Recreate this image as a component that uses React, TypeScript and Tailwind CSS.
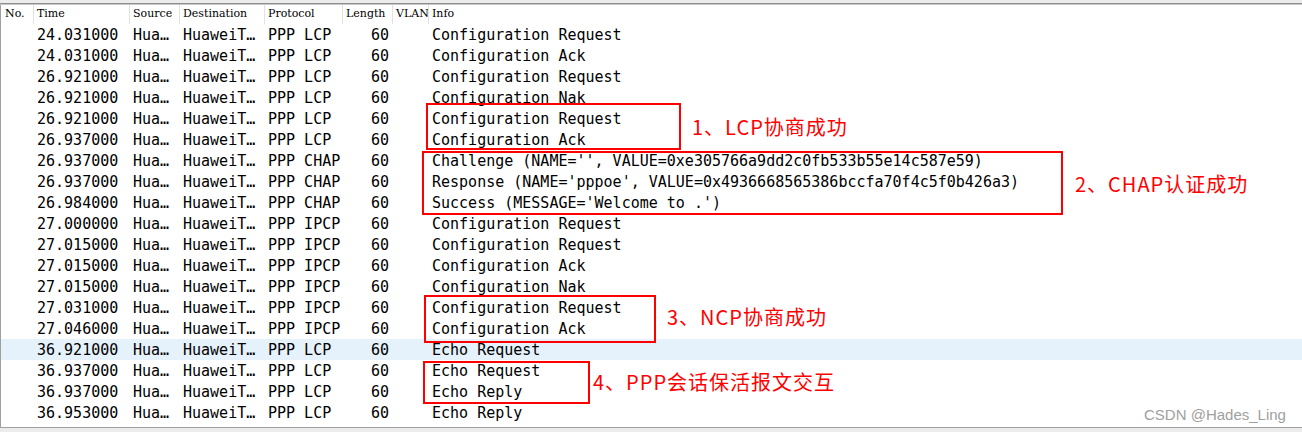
const rows: [string, string, string][] = [
  ['24.031000', 'PPP LCP', 'Configuration Request'],
  ['24.031000', 'PPP LCP', 'Configuration Ack'],
  ['26.921000', 'PPP LCP', 'Configuration Request'],
  ['26.921000', 'PPP LCP', 'Configuration Nak'],
  ['26.921000', 'PPP LCP', 'Configuration Request'],
  ['26.937000', 'PPP LCP', 'Configuration Ack'],
  ['26.937000', 'PPP CHAP', "Challenge (NAME='', VALUE=0xe305766a9dd2c0fb533b55e14c587e59)"],
  ['26.937000', 'PPP CHAP', "Response (NAME='pppoe', VALUE=0x4936668565386bccfa70f4c5f0b426a3)"],
  ['26.984000', 'PPP CHAP', "Success (MESSAGE='Welcome to .')"],
  ['27.000000', 'PPP IPCP', 'Configuration Request'],
  ['27.015000', 'PPP IPCP', 'Configuration Request'],
  ['27.015000', 'PPP IPCP', 'Configuration Ack'],
  ['27.015000', 'PPP IPCP', 'Configuration Nak'],
  ['27.031000', 'PPP IPCP', 'Configuration Request'],
  ['27.046000', 'PPP IPCP', 'Configuration Ack'],
  ['36.921000', 'PPP LCP', 'Echo Request'],
  ['36.937000', 'PPP LCP', 'Echo Request'],
  ['36.937000', 'PPP LCP', 'Echo Reply'],
  ['36.953000', 'PPP LCP', 'Echo Reply'],
];

const cols = 'grid grid-cols-[32px_96px_50px_85px_78px_50px_36px_1fr]';
const headers = ['No.', 'Time', 'Source', 'Destination', 'Protocol', 'Length', 'VLAN', 'Info'];

// red hand-drawn notes over the packet list
const note =
  "absolute text-[20px] leading-none tracking-[1px] text-[#ff0000] [font-family:'Noto_Sans_CJK_SC','Noto_Sans',sans-serif] whitespace-nowrap";

export default function App() {
  return (
    <div className="w-[1302px] h-[432px] bg-[#ececec] overflow-hidden">
      <div className="h-[3px]" />
      <div className="h-px bg-[#8e8e8e]" />
      <div className="h-px bg-[#c8c8c8]" />
      <div className="relative h-[423px] border-l border-[#a0a0a0] border-b bg-white">
        {/* header */}
        <div className={`${cols} h-[19px] text-[11px] text-black [font-family:'DejaVu_Serif','Liberation_Serif',serif]`}>
          {headers.map((h, i) => (
            <div
              key={h}
              className={`flex items-center ${i > 0 ? 'pl-[3px] border-l border-[#e2e2e2]' : 'pl-[4px]'}`}
            >
              {h}
            </div>
          ))}
        </div>

        {/* rows */}
        <div className="text-[15px] text-black [font-family:'DejaVu_Sans_Mono','Liberation_Mono',monospace]">
          {rows.map(([t, p, info], i) => (
            <div
              key={i}
              className={`${cols} h-[21px] items-center whitespace-pre ${i === 15 ? 'bg-[#e5f1fb]' : ''}`}
            >
              <div />
              <div className="pl-[4px]">{t}</div>
              <div className="pl-[4px]">Hua…</div>
              <div className="pl-[4px]">HuaweiT…</div>
              <div className="pl-[4px]">{p}</div>
              <div className="pr-[3px] text-right">60</div>
              <div />
              <div className="pl-[4px]">{info}</div>
            </div>
          ))}
        </div>

        {/* annotation boxes */}
        <div className="absolute left-[425px] top-[98px] w-[255px] h-[47px] border-2 border-[#ff0000]" />
        <div className="absolute left-[421px] top-[146px] w-[641px] h-[64px] border-2 border-[#ff0000]" />
        <div className="absolute left-[423px] top-[290px] w-[232px] h-[48px] border-2 border-[#ff0000]" />
        <div className="absolute left-[422px] top-[356px] w-[167px] h-[43px] border-2 border-[#ff0000]" />

        <div className={`${note} left-[691px] top-[112px]`}>1、LCP协商成功</div>
        <div className={`${note} left-[1074px] top-[169px]`}>2、CHAP认证成功</div>
        <div className={`${note} left-[666px] top-[302px]`}>3、NCP协商成功</div>
        <div className={`${note} left-[592px] top-[367px]`}>4、PPP会话保活报文交互</div>

        <div className="absolute left-[1143px] top-[399px] text-[15px] text-[#a0a0a0] [font-family:'Liberation_Sans','Noto_Sans',sans-serif]">
          CSDN @Hades_Ling
        </div>
      </div>
    </div>
  );
}
